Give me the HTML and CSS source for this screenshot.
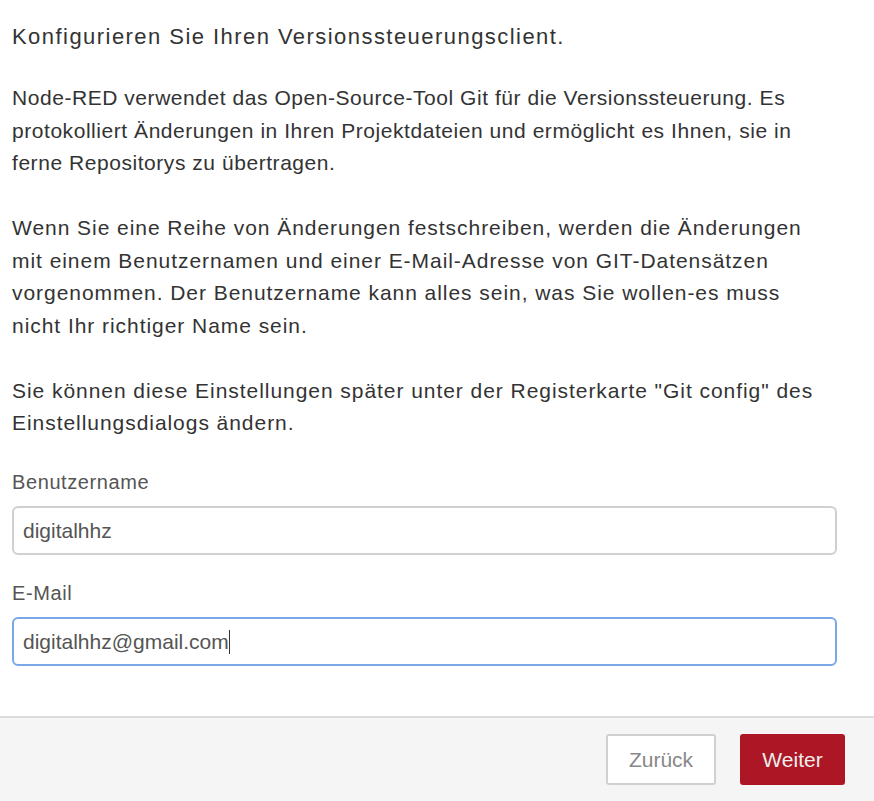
FILE: index.html
```html
<!DOCTYPE html>
<html lang="de">
<head>
<meta charset="utf-8">
<title>Versionssteuerungsclient</title>
<link rel="stylesheet" href="styles.css">
</head>
<body>
<div class="dialog">
  <div class="content">
    <p class="title">Konfigurieren Sie Ihren Versionssteuerungsclient.</p>
    <p>Node-RED verwendet das Open-Source-Tool Git für die Versionssteuerung. Es<br>protokolliert Änderungen in Ihren Projektdateien und ermöglicht es Ihnen, sie in<br>ferne Repositorys zu übertragen.</p>
    <p class="wide">Wenn Sie eine Reihe von Änderungen festschreiben, werden die Änderungen<br>mit einem Benutzernamen und einer E-Mail-Adresse von GIT-Datensätzen<br>vorgenommen. Der Benutzername kann alles sein, was Sie wollen-es muss<br>nicht Ihr richtiger Name sein.</p>
    <p class="wide">Sie können diese Einstellungen später unter der Registerkarte "Git config" des<br>Einstellungsdialogs ändern.</p>
    <div class="field">
      <label class="label">Benutzername</label>
      <div class="input">digitalhhz</div>
    </div>
    <div class="field">
      <label class="label">E-Mail</label>
      <div class="input focus">digitalhhz@gmail.com<span class="caret"></span></div>
    </div>
  </div>
  <div class="footer">
    <button class="btn secondary">Zurück</button>
    <button class="btn primary">Weiter</button>
  </div>
</div>
</body>
</html>
```
FILE: styles.css
```css
html, body {
  margin: 0;
  padding: 0;
  background: #fff;
}
body {
  font-family: "Liberation Sans", Arial, sans-serif;
  color: #333;
  width: 874px;
  height: 801px;
  overflow: hidden;
}
.dialog {
  display: flex;
  flex-direction: column;
  height: 801px;
}
.content {
  padding: 21px 0 0 12px;
  flex: 1;
}
.content p {
  margin: 0 0 32.5px 0;
  font-size: 21px;
  letter-spacing: 0.55px;
  line-height: 32.5px;
  white-space: nowrap;
}
.content p.wide {
  letter-spacing: 0.95px;
}
.content p.title {
  margin-bottom: 28.5px;
  font-size: 22px;
  letter-spacing: 1.45px;
}
.field {
  margin-bottom: 24px;
}
.content p + .field {
  margin-top: -4px;
}
.label {
  display: block;
  font-size: 20px;
  letter-spacing: 0.6px;
  color: #555;
  line-height: 28px;
  margin-bottom: 10px;
}
.input {
  box-sizing: border-box;
  width: 825px;
  height: 49px;
  border: 2px solid #d0d0d0;
  border-radius: 6px;
  padding: 0 9px;
  font-size: 21px;
  line-height: 45px;
  color: #555;
}
.input.focus {
  border-color: #7aa8e6;
}
.caret {
  display: inline-block;
  width: 1px;
  height: 24px;
  background: #333;
  vertical-align: -5px;
}
.footer {
  border-top: 2px solid #dcdcdc;
  background: #f5f5f5;
  display: flex;
  justify-content: flex-end;
  align-items: flex-start;
  gap: 24px;
  padding: 16px 29px 0 0;
  box-sizing: border-box;
  height: 85px;
}
.btn {
  font-family: "Liberation Sans", Arial, sans-serif;
  font-size: 21px;
  height: 51px;
  border-radius: 3px;
  padding: 0;
  cursor: pointer;
}
.btn.secondary {
  background: #fff;
  border: 2px solid #d0d0d0;
  color: #888;
  width: 110px;
}
.btn.primary {
  background: #ad1625;
  border: none;
  color: #eee;
  width: 105px;
}
```
